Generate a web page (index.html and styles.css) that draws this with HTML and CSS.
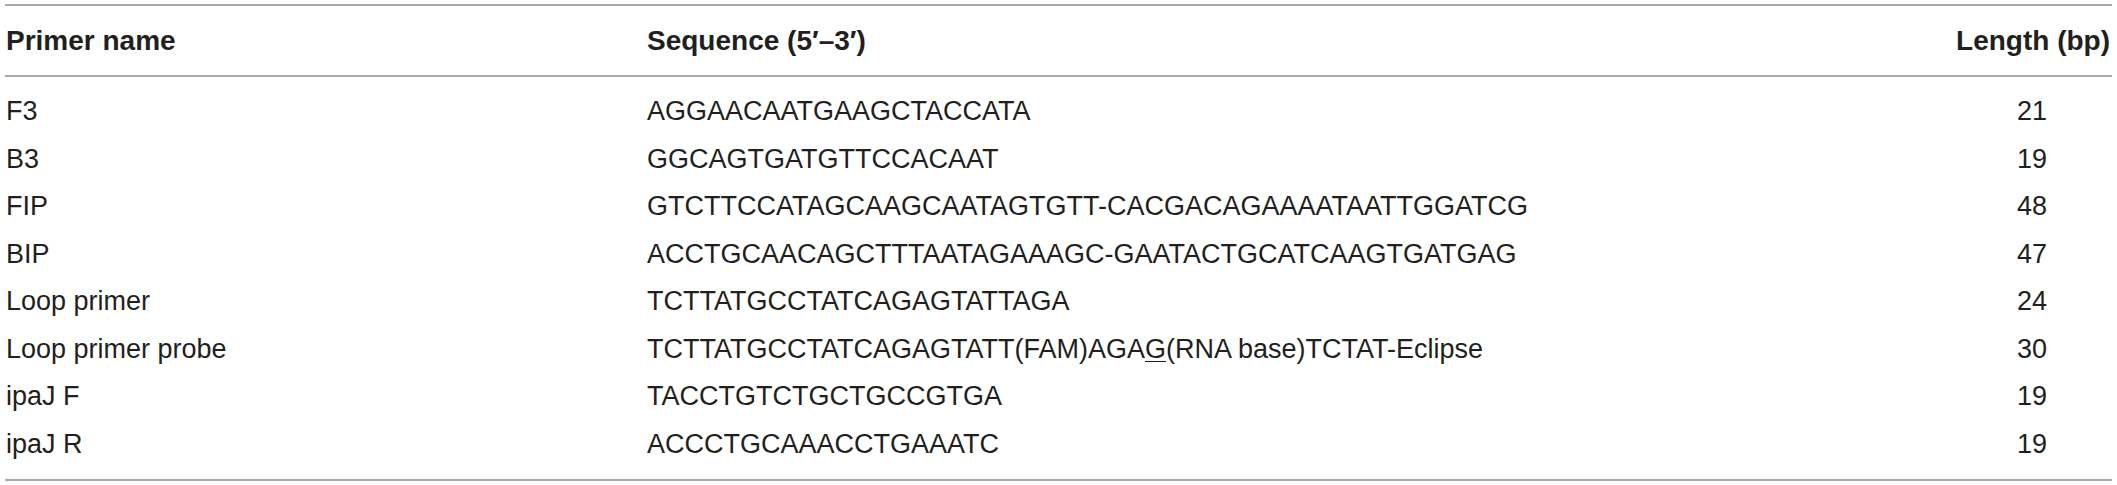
FILE: index.html
```html
<!DOCTYPE html>
<html>
<head>
<meta charset="utf-8">
<link rel="stylesheet" href="styles.css">
</head>
<body>
<div class="wrap">
<table class="primers">
  <colgroup>
    <col class="c-name">
    <col class="c-seq">
    <col class="c-len">
  </colgroup>
  <thead>
    <tr><th class="name">Primer name</th><th class="seq">Sequence (5′–3′)</th><th class="len">Length (bp)</th></tr>
  </thead>
  <tbody>
    <tr class="first"><td class="name">F3</td><td class="seq">AGGAACAATGAAGCTACCATA</td><td class="len">21</td></tr>
    <tr><td class="name">B3</td><td class="seq">GGCAGTGATGTTCCACAAT</td><td class="len">19</td></tr>
    <tr><td class="name">FIP</td><td class="seq">GTCTTCCATAGCAAGCAATAGTGTT-CACGACAGAAAATAATTGGATCG</td><td class="len">48</td></tr>
    <tr><td class="name">BIP</td><td class="seq">ACCTGCAACAGCTTTAATAGAAAGC-GAATACTGCATCAAGTGATGAG</td><td class="len">47</td></tr>
    <tr><td class="name">Loop primer</td><td class="seq">TCTTATGCCTATCAGAGTATTAGA</td><td class="len">24</td></tr>
    <tr><td class="name">Loop primer probe</td><td class="seq">TCTTATGCCTATCAGAGTATT(FAM)AGA<u>G</u>(RNA base)TCTAT-Eclipse</td><td class="len">30</td></tr>
    <tr><td class="name">ipaJ F</td><td class="seq">TACCTGTCTGCTGCCGTGA</td><td class="len">19</td></tr>
    <tr class="last"><td class="name">ipaJ R</td><td class="seq">ACCCTGCAAACCTGAAATC</td><td class="len">19</td></tr>
  </tbody>
</table>
</div>
</body>
</html>
```
FILE: styles.css
```css
html, body {
  margin: 0;
  padding: 0;
  background: #ffffff;
}
.wrap {
  padding: 4px 5px 0 5px;
}
.primers {
  width: 2107px;
  border-collapse: collapse;
  font-family: "Liberation Sans", Arial, sans-serif;
  font-size: 27px;
  color: #231f20;
  table-layout: fixed;
}
.c-name { width: 642px; }
.c-len { width: 160px; }
.primers thead tr {
  border-top: 2px solid #a9a9a9;
  border-bottom: 2px solid #a9a9a9;
}
.primers th {
  font-size: 28px;
  font-weight: bold;
  line-height: 30px;
  padding: 20px 0 19px 0;
  text-align: left;
  white-space: nowrap;
}
.primers td {
  line-height: 47.5px;
  padding: 0;
  white-space: nowrap;
}
.primers .name { padding-left: 1px; }
.primers .len { text-align: center; }
.primers th.len { text-align: right; padding-right: 2px; }
.primers tr.first td { padding-top: 11px; }
.primers tr.last td { padding-bottom: 11px; }
.primers tbody { border-bottom: 2px solid #a9a9a9; }
.primers u {
  text-decoration-thickness: 1px;
  text-underline-offset: 3px;
}
```
